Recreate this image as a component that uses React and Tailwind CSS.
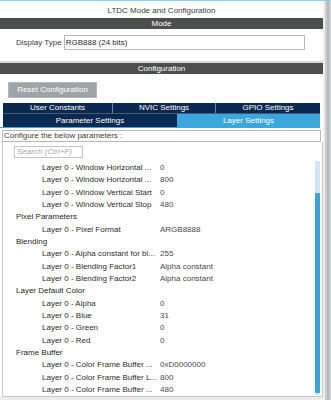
const rows = [
  { t: 'item', label: 'Layer 0 - Window Horizontal ...', value: '0' },
  { t: 'item', label: 'Layer 0 - Window Horizontal ...', value: '800' },
  { t: 'item', label: 'Layer 0 - Window Vertical Start', value: '0' },
  { t: 'item', label: 'Layer 0 - Window Vertical Stop', value: '480' },
  { t: 'head', label: 'Pixel Parameters' },
  { t: 'item', label: 'Layer 0 - Pixel Format', value: 'ARGB8888' },
  { t: 'head', label: 'Blending' },
  { t: 'item', label: 'Layer 0 - Alpha constant for bl...', value: '255' },
  { t: 'item', label: 'Layer 0 - Blending Factor1', value: 'Alpha constant' },
  { t: 'item', label: 'Layer 0 - Blending Factor2', value: 'Alpha constant' },
  { t: 'head', label: 'Layer Default Color' },
  { t: 'item', label: 'Layer 0 - Alpha', value: '0' },
  { t: 'item', label: 'Layer 0 - Blue', value: '31' },
  { t: 'item', label: 'Layer 0 - Green', value: '0' },
  { t: 'item', label: 'Layer 0 - Red', value: '0' },
  { t: 'head', label: 'Frame Buffer' },
  { t: 'item', label: 'Layer 0 - Color Frame Buffer ...', value: '0xD0000000' },
  { t: 'item', label: 'Layer 0 - Color Frame Buffer L...', value: '800' },
  { t: 'item', label: 'Layer 0 - Color Frame Buffer ...', value: '480' },
]

function Row({ row }) {
  if (row.t === 'head') {
    return (
      <div className="h-[12.33px] leading-[13px] pl-[13px] text-[#1f1f1f] whitespace-nowrap">{row.label}</div>
    )
  }
  return (
    <div className="h-[12.33px] leading-[13px] pl-[39px] flex whitespace-nowrap">
      <span className="w-[118px] overflow-hidden text-[#2e2e2e]">{row.label}</span>
      <span className="text-[#4a4a4a]">{row.value}</span>
    </div>
  )
}

export default function App() {
  return (
    <div
      className="w-[331px] h-[400px] bg-white flex flex-col border-t border-[#8fcdf0] overflow-hidden text-[8px]"
      style={{ fontFamily: '"Liberation Sans", Arial, sans-serif' }}
    >
      <div className="flex flex-1 min-h-0">
        {/* main column */}
        <div className="w-[323px] flex flex-col bg-[#ececec]">
          <div className="bg-white flex flex-col">
            <div className="h-[17px] pt-[2px] flex items-center justify-center text-[#3c3c3c]">LTDC Mode and Configuration</div>
            <div className="h-[11px] leading-[11px] bg-[#4d4f4f] text-white text-center">Mode</div>
            <div className="h-[32px] pt-[6px] pl-[16px] flex items-start">
              <span className="h-[15px] leading-[15px] text-[#3c3c3c]">Display Type</span>
              <div className="ml-[2px] w-[241px] h-[15px] leading-[13px] border border-[#b8b8b8] px-[1px] text-[#2e2e2e]">
                RGB888 (24 bits)
              </div>
            </div>
          </div>
          <div className="h-[2px] bg-[#d6d6d6]" />
          <div className="bg-white flex flex-col flex-1 min-h-0">
            <div className="h-[11px] leading-[11px] bg-[#4d4f4f] text-white text-center">Configuration</div>
            <div className="mt-[8px] ml-[8px] w-[89px] h-[16px] bg-[#9ea3a7] border border-[#b4b8bb] text-white flex items-center justify-center">
              Reset Configuration
            </div>
            <div className="mt-[5px] mx-[3px] flex flex-col text-white">
              <div className="grid grid-cols-[110px_103px_104px] h-[11px] bg-[#0a2850] border-b border-[#3f5d7d]">
                <div className="leading-[10px] text-center border-r border-[#6b84a0]">User Constants</div>
                <div className="leading-[10px] text-center border-r border-[#6b84a0]">NVIC Settings</div>
                <div className="leading-[10px] text-center">GPIO Settings</div>
              </div>
              <div className="grid grid-cols-[174px_143px] h-[13px]">
                <div className="leading-[13px] text-center bg-[#0a2850]">Parameter Settings</div>
                <div className="leading-[13px] text-center bg-[#3ba7dd]">Layer Settings</div>
              </div>
            </div>
            <div className="h-[1px] bg-[#3ba7dd] mr-[3px]" />
            <div className="mt-[2px] mx-[2px] h-[12px] leading-[10px] border border-[#b8b8b8] pl-[1px] text-[#3c3c3c]">
              Configure the below parameters :
            </div>
            <div className="ml-[2px] w-[321px] flex-1 min-h-0 flex flex-col border-l border-r border-b border-[#c9c9c9]">
              <div className="mt-[4px] ml-[11px] w-[69px] h-[12px] leading-[10px] border border-[#c4c4c4] pl-[2px] italic text-[#a8a8a8]">
                Search (Ctrl+F)
              </div>
              <div className="mt-[3px] flex flex-1 min-h-0">
                <div className="flex-1 flex flex-col overflow-hidden">
                  {rows.map((r, i) => <Row key={i} row={r} />)}
                </div>
                <div className="w-[5px] mr-[2px] h-[234px] bg-[#d3e6f4] flex flex-col">
                  <div className="h-[32px]" />
                  <div className="h-[200px] bg-[#3aa3da] rounded-[1px]" />
                </div>
              </div>
            </div>
            <div className="h-[3px] bg-[#ececec]" />
          </div>
        </div>
        {/* right gutter */}
        <div className="w-[8px] flex">
          <div className="w-[2px] bg-[#eeeeee]" />
          <div className="w-[2px] bg-[#c9ced2]" />
          <div className="w-[2px] bg-[#b2b8bc]" />
          <div className="w-[2px] bg-[#c9ced2]" />
        </div>
      </div>
    </div>
  )
}
